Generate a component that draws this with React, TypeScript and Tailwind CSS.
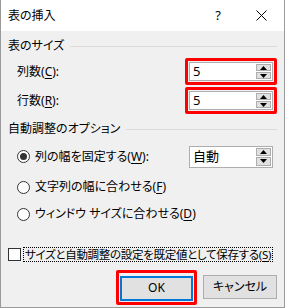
import React from 'react'

const font = "[font-family:'Noto_Sans','Noto_Sans_CJK_JP',sans-serif] [font-feature-settings:'palt']"

function Key({ k }: { k: string }) {
  return (
    <>
      (<span className="underline underline-offset-2">{k}</span>)
    </>
  )
}

function Arrows() {
  return (
    <div className="flex flex-col w-[16px] h-full gap-px py-px pr-px">
      <div className="flex-1 flex items-center justify-center bg-[#e1e1e1] border border-[#adadad]">
        <svg width="7" height="4" viewBox="0 0 7 4">
          <path d="M0 4 L3.5 0 L7 4 Z" fill="#000" />
        </svg>
      </div>
      <div className="flex-1 flex items-center justify-center bg-[#e1e1e1] border border-[#adadad]">
        <svg width="7" height="4" viewBox="0 0 7 4">
          <path d="M0 0 L7 0 L3.5 4 Z" fill="#000" />
        </svg>
      </div>
    </div>
  )
}

function Spin({ value, wide }: { value: string; wide?: boolean }) {
  return (
    <div className={`flex items-center bg-white border border-[#adadad] ${wide ? 'w-[84px] h-[22px]' : 'w-[84px] h-[19px]'}`}>
      <span className="flex-1 pl-[3px] text-[13px] leading-none text-black">{value}</span>
      <Arrows />
    </div>
  )
}

function Header({ text }: { text: string }) {
  return (
    <div className="flex items-center gap-[6px] h-[14px]">
      <span className="text-[12px] leading-none text-[#000]">{text}</span>
      <div className="flex-1 h-px bg-[#dcdcdc]" />
    </div>
  )
}

function Radio({ checked, children }: { checked?: boolean; children: React.ReactNode }) {
  return (
    <div className="flex items-center gap-[5px] pl-[9px]">
      <div className="w-[13px] h-[13px] shrink-0 rounded-full border border-[#333] bg-white flex items-center justify-center">
        {checked && <div className="w-[7px] h-[7px] rounded-full bg-[#333]" />}
      </div>
      <span className="text-[12px] leading-none">{children}</span>
    </div>
  )
}

export default function App() {
  return (
    <div className={`w-[285px] h-[308px] bg-[#f0f0f0] border-x border-b border-[#9a9a9a] text-black ${font}`}>
      {/* Title bar */}
      <div className="h-[31px] bg-white flex items-center pl-[7px]">
        <span className="text-[12px] leading-none">表の挿入</span>
        <span className="ml-auto text-[13px] leading-none mr-[35px]">?</span>
        <svg width="11" height="11" viewBox="0 0 11 11" className="mr-[17px]">
          <path d="M0.5 0.5 L10.5 10.5 M10.5 0.5 L0.5 10.5" stroke="#000" strokeWidth="1" />
        </svg>
      </div>

      <div className="flex flex-col pl-[7px] pr-[7px]">
        <div className="mt-[8px]">
          <Header text="表のサイズ" />
        </div>

        <div className="mt-[5px] flex items-center h-[27px]">
          <span className="pl-[9px] text-[12px] leading-none">列数<Key k="C" />:</span>
          <div className="ml-auto border-[3px] border-[#ff0000] rounded-[2px] p-px">
            <Spin value="5" />
          </div>
        </div>
        <div className="mt-[2px] flex items-center h-[27px]">
          <span className="pl-[9px] text-[12px] leading-none">行数<Key k="R" />:</span>
          <div className="ml-auto border-[3px] border-[#ff0000] rounded-[2px] p-px">
            <Spin value="5" />
          </div>
        </div>

        <div className="mt-[8px]">
          <Header text="自動調整のオプション" />
        </div>

        <div className="mt-[9px] flex items-center h-[23px]">
          <Radio checked>
            列の幅を固定する<Key k="W" />:
          </Radio>
          <div className="ml-auto mr-[4px]">
            <Spin value="自動" wide />
          </div>
        </div>
        <div className="mt-[7px] flex items-center h-[24px]">
          <Radio>
            文字列の幅に合わせる<Key k="F" />
          </Radio>
        </div>
        <div className="mt-[3px] flex items-center h-[24px]">
          <Radio>
            ウィンドウ サイズに合わせる<Key k="D" />
          </Radio>
        </div>

        <div className="mt-[21px] flex items-center gap-[2px] h-[15px]">
          <div className="w-[13px] h-[13px] shrink-0 border border-[#333] bg-white" />
          <span className="shrink-0 h-[15px] flex items-center border border-dotted border-black pl-px pr-px text-[11.5px] tracking-[-0.3px] leading-none whitespace-nowrap">
            サイズと自動調整の設定を既定値として保存する<Key k="S" />
          </span>
        </div>

        <div className="mt-[8px] flex items-center justify-end gap-[6px]">
          <div className="border-[3px] border-[#ff0000] rounded-[2px] p-px">
            <button className="w-[73px] h-[25px] bg-[#e1e1e1] border-2 border-[#0078d7] text-[12px] leading-none">
              OK
            </button>
          </div>
          <button className="w-[74px] h-[24px] bg-[#e1e1e1] border border-[#adadad] text-[12px] leading-none">
            キャンセル
          </button>
        </div>
      </div>
    </div>
  )
}
